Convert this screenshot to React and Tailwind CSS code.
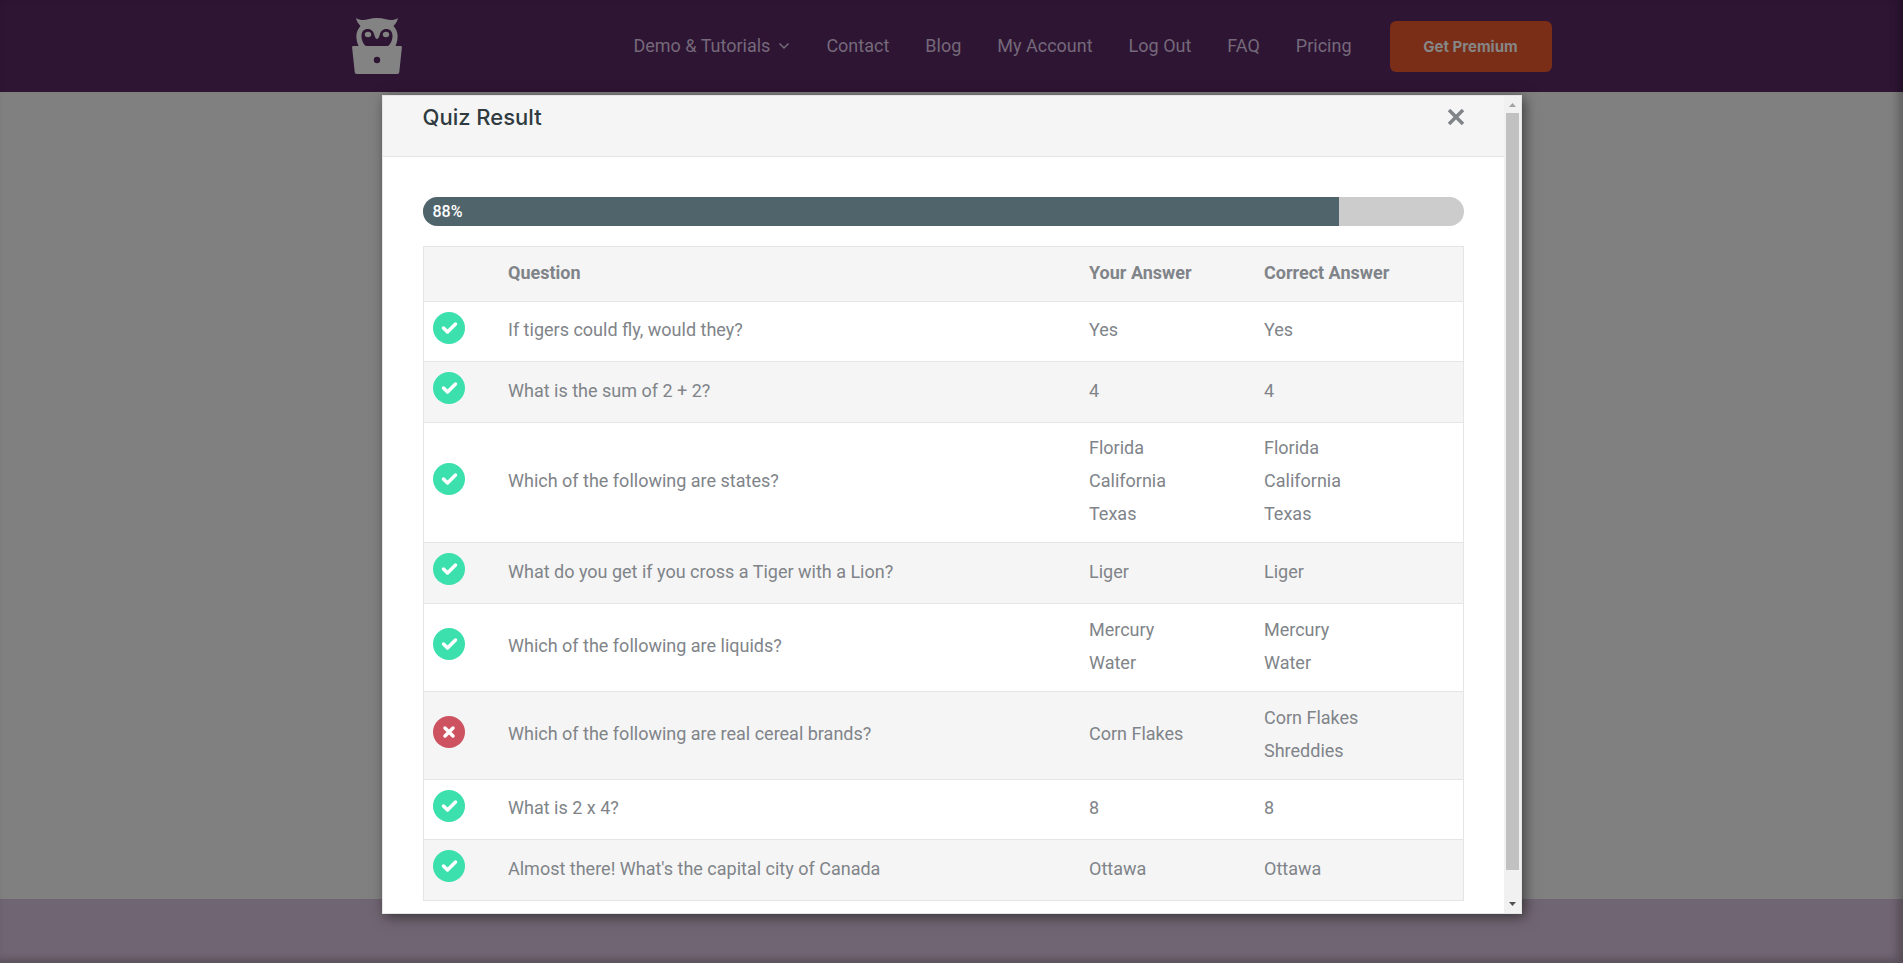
const navLinks = ["Contact", "Blog", "My Account", "Log Out", "FAQ", "Pricing"];

const results = [
    { question: "If tigers could fly, would they?", yours: ["Yes"], correct: ["Yes"], ok: true },
    { question: "What is the sum of 2 + 2?", yours: ["4"], correct: ["4"], ok: true },
    { question: "Which of the following are states?", yours: ["Florida", "California", "Texas"], correct: ["Florida", "California", "Texas"], ok: true },
    { question: "What do you get if you cross a Tiger with a Lion?", yours: ["Liger"], correct: ["Liger"], ok: true },
    { question: "Which of the following are liquids?", yours: ["Mercury", "Water"], correct: ["Mercury", "Water"], ok: true },
    { question: "Which of the following are real cereal brands?", yours: ["Corn Flakes"], correct: ["Corn Flakes", "Shreddies"], ok: false },
    { question: "What is 2 x 4?", yours: ["8"], correct: ["8"], ok: true },
    { question: "Almost there! What's the capital city of Canada", yours: ["Ottawa"], correct: ["Ottawa"], ok: true },
];

function OwlLogo() {
    return (
        <svg width="50" height="56" viewBox="0 0 50 56" className="fill-[#838383]" aria-hidden="true">
            <path
                fillRule="evenodd"
                d="M4 0C8 2.500 12 2.500 16 1.300C22 -.400 28 -.400 34 1.300C38 2.500 42 2.500 46 0C45.500 3 43.500 6 41.500 8C45 12 46 16 45.500 20C45.300 23 44.600 25.500 43.500 28H48.500C49.500 28 50 28.600 49.900 29.500L47.300 54C47.100 55.300 46.500 56 45.300 56H4.700C3.500 56 2.900 55.300 2.700 54L.100 29.500C0 28.600 .500 28 1.500 28H6.500C5.400 25.500 4.700 23 4.500 20C4 16 5 12 8.500 8C6.500 6 4.500 3 4 0ZM14 28H36C39 26 40.500 21.500 40.500 18C40.500 13.500 38 11 34.300 11C30.500 11 28.500 13.500 27.800 16.500C27 19.500 26 21 25 21C24 21 23 19.500 22.200 16.500C21.500 13.500 19.500 11 15.700 11C12 11 9.500 13.500 9.500 18C9.500 21.500 11 26 14 28ZM25 38.800A3.200 3.200 0 1 0 25 45.200A3.200 3.200 0 1 0 25 38.800Z"
            />
            <ellipse cx="16" cy="16.500" rx="3.200" ry="2.800" />
            <ellipse cx="34" cy="16.500" rx="3.200" ry="2.800" />
        </svg>
    );
}

function ResultIcon({ ok }) {
    return (
        <svg width="32" height="32" viewBox="0 0 32 32" fill="none" role="img" aria-label={ok ? "Correct" : "Incorrect"}>
            <circle cx="16" cy="16" r="16" className={ok ? "fill-[#3be0ad]" : "fill-[#cc535f]"} />
            <path
                d={ok ? "M10.500 16L14.500 20L22.500 12" : "M12 12L20 20M20 12L12 20"}
                stroke="white"
                strokeWidth="3.500"
                strokeLinecap="round"
                strokeLinejoin="round"
            />
        </svg>
    );
}

function Answers({ items }) {
    return items.map((item) => <div key={item}>{item}</div>);
}

function rowHeight(row) {
    const lines = Math.max(row.yours.length, row.correct.length);
    if (lines === 3) return "h-[120px]";
    if (lines === 2) return "h-[88px]";
    return "odd:h-[60px] even:h-[61px]";
}

function ResultTable() {
    return (
        <table className="mt-5 w-full table-fixed border-collapse border border-[#e5e5e5] text-left text-lg leading-[33px] text-[#808489]">
            <colgroup>
                <col className="w-[75px]" />
                <col />
                <col className="w-[175px]" />
                <col className="w-[209px]" />
            </colgroup>
            <thead>
                <tr className="h-[55px] bg-[#f5f5f5]">
                    <td></td>
                    <th scope="col" className="px-[10px] pb-1 font-bold">Question</th>
                    <th scope="col" className="px-[10px] pb-1 font-bold">Your Answer</th>
                    <th scope="col" className="px-[10px] pb-1 font-bold">Correct Answer</th>
                </tr>
            </thead>
            <tbody>
                {results.map((row) => (
                    <tr key={row.question} className={`border-t border-[#e5e5e5] even:bg-[#f5f5f5] ${rowHeight(row)}`}>
                        <td className="pb-2 pl-[9px]">
                            <div className="flex">
                                <ResultIcon ok={row.ok} />
                            </div>
                        </td>
                        <td className="px-[10px] pb-1">{row.question}</td>
                        <td className="px-[10px] pb-1"><Answers items={row.yours} /></td>
                        <td className="px-[10px] pb-1"><Answers items={row.correct} /></td>
                    </tr>
                ))}
            </tbody>
        </table>
    );
}

function Scrollbar() {
    return (
        <div className="flex w-[17px] shrink-0 flex-col items-center bg-[#f1f1f1]" aria-hidden="true">
            <svg width="17" height="17" viewBox="0 0 17 17" className="shrink-0 fill-[#a3a3a3]">
                <path d="M5 11H12L8.500 7Z" />
            </svg>
            <div className="w-[13px] flex-1 bg-[#c1c1c1]"></div>
            <div className="h-[26px]"></div>
            <svg width="17" height="17" viewBox="0 0 17 17" className="shrink-0 fill-[#505050]">
                <path d="M5 6H12L8.500 10Z" />
            </svg>
        </div>
    );
}

function QuizResultModal({ score }) {
    return (
        <div role="dialog" aria-labelledby="quiz-result-title" className="flex w-full max-w-[1140px] border border-[#e5e5e5] bg-white shadow-[3px_3px_12px_rgba(0,0,0,0.5)]">
            <div className="min-w-0 flex-1">
                <div className="flex h-[61px] items-start justify-between border-b border-[#e5e5e5] bg-[#f5f5f5] px-10 pt-[3px]">
                    <h2 id="quiz-result-title" className="font-[Inter] text-[22px] leading-9 font-medium text-[#2f3b40]">Quiz Result</h2>
                    <button type="button" aria-label="Close" className="flex h-9 w-4 items-center justify-center">
                        <svg width="16" height="16" viewBox="0 0 16 16" className="stroke-[#808489]" strokeWidth="3.500" aria-hidden="true">
                            <path d="M1 1L15 15M15 1L1 15" />
                        </svg>
                    </button>
                </div>
                <div className="px-10 pt-10 pb-3">
                    <div className="overflow-hidden rounded-full bg-[#cccccc]">
                        <div className="h-[29px] bg-[#50646c] pl-[10px] text-base leading-[29px] font-medium text-white" style={{ width: `${score}%` }}>
                            {score}%
                        </div>
                    </div>
                    <ResultTable />
                </div>
            </div>
            <Scrollbar />
        </div>
    );
}

function Header() {
    return (
        <header className="h-[92px] bg-[#2e1534]">
            <div className="mx-auto flex h-full max-w-[1200px] items-center justify-between">
                <a href="#" aria-label="Home">
                    <OwlLogo />
                </a>
                <nav className="flex items-center gap-9 text-lg text-[#75697a]">
                    <a href="#" className="flex items-center gap-2">
                        Demo &amp; Tutorials
                        <svg width="12" height="8" viewBox="0 0 12 8" fill="none" stroke="currentColor" strokeWidth="1.500" aria-hidden="true">
                            <path d="M1.500 1.500L6 6L10.500 1.500" />
                        </svg>
                    </a>
                    {navLinks.map((link) => (
                        <a key={link} href="#">{link}</a>
                    ))}
                    <a href="#" className="ml-0.5 flex h-[51px] w-[162px] items-center justify-center rounded-md bg-[#7a2d17] pt-0.5 font-[Inter] text-[15px] font-bold text-[#868686]">
                        Get Premium
                    </a>
                </nav>
            </div>
        </header>
    );
}

function App() {
    return (
        <div className="relative flex min-h-screen flex-col bg-[#808080] font-[Roboto,sans-serif]">
            <Header />
            <main className="flex-1"></main>
            <footer className="h-16 bg-[#706572]"></footer>
            <div className="absolute inset-0 flex items-start justify-center pt-[95px] shadow-[inset_-5px_-3px_8px_rgba(0,0,0,0.25)]">
                <QuizResultModal score={88} />
            </div>
        </div>
    );
}

export default App;
